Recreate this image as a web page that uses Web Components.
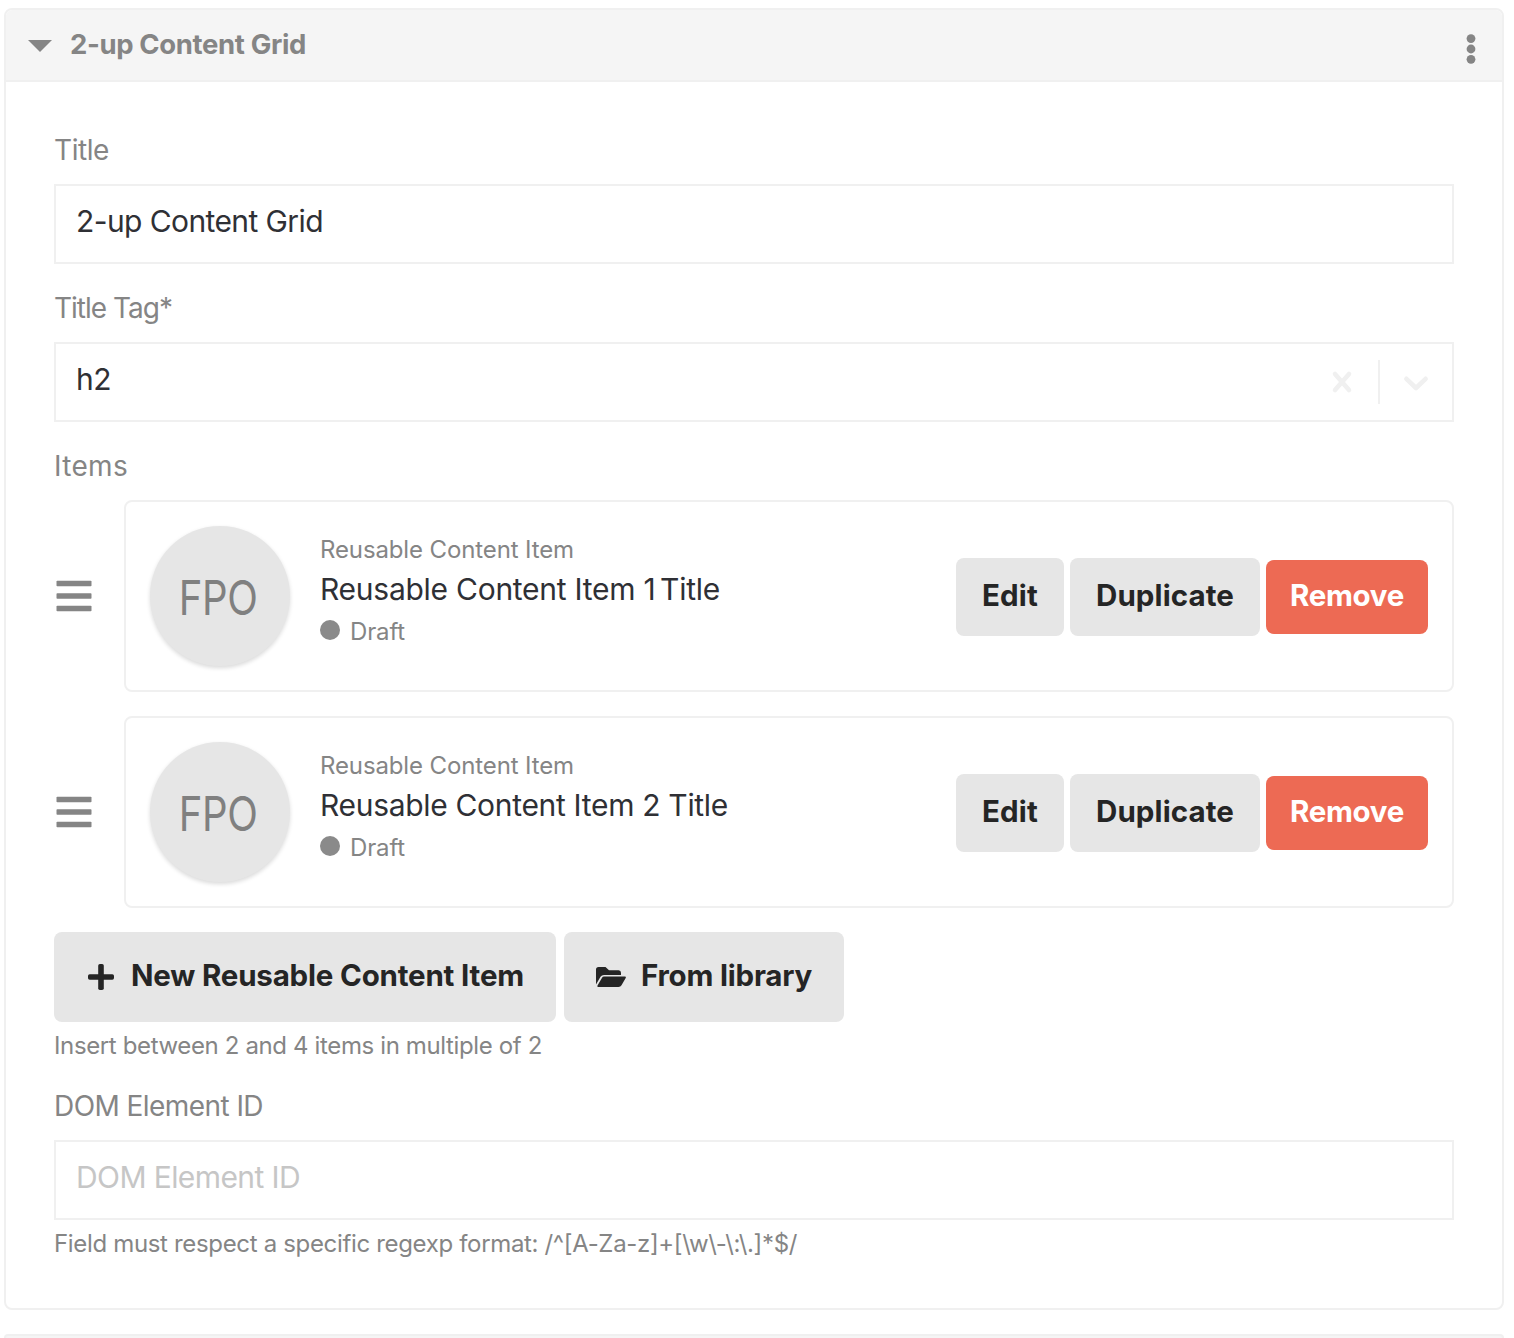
<!DOCTYPE html>
<html lang="en">
<head>
<meta charset="utf-8">
<title>2-up Content Grid</title>
<style>
html,body{margin:0;background:#fff}
body{font-family:Inter,"Liberation Sans",sans-serif;color:#2f3035;--line:#f0f0f0;--muted:#858585;--btn:#e6e6e6;font-size:28px}
main{display:flex;flex-direction:column;gap:24px;padding:8px 10px 0 4px;box-sizing:border-box;height:1338px;overflow:hidden}
.tight{word-spacing:-3.500px}
</style>
</head>
<body>
<main>
  <block-panel>
    <fit-text slot="title" w="236">2-up Content Grid</fit-text>
    <form-field>
      <fit-text slot="label" w="55">Title</fit-text>
      <text-box><fit-text w="247">2-up Content Grid</fit-text></text-box>
    </form-field>
    <form-field>
      <fit-text slot="label" w="118">Title Tag*</fit-text>
      <text-box kind="select"><fit-text w="35">h2</fit-text></text-box>
    </form-field>
    <form-field>
      <fit-text slot="label" w="74">Items</fit-text>
      <content-item><fit-text w="400">Reusable Content Item 1<span class="tight"> Title</span></fit-text></content-item>
      <content-item><fit-text w="408">Reusable Content Item 2 Title</fit-text></content-item>
      <item-actions></item-actions>
      <fit-text slot="hint" w="488">Insert between 2 and 4 items in multiple of 2</fit-text>
    </form-field>
    <form-field>
      <fit-text slot="label" w="209">DOM Element ID</fit-text>
      <text-box kind="empty"><fit-text w="224">DOM Element ID</fit-text></text-box>
      <fit-text slot="hint" w="743">Field must respect a specific regexp format: /^[A-Za-z]+[\w\-\:\.]*$/</fit-text>
    </form-field>
  </block-panel>
  <block-panel bare></block-panel>
</main>
<script>
const define = (name, html, ready) => customElements.define(name, class extends HTMLElement {
  connectedCallback() {
    if (this.shadowRoot) return;
    const t = document.createElement('template');
    t.innerHTML = html;
    this.attachShadow({ mode: 'open' }).append(t.content.cloneNode(true));
    if (ready) ready(this);
  }
});

define('block-panel', `
<style>
:host{display:block;flex:none;border:2px solid var(--line);border-radius:8px;overflow:hidden}
:host([bare]){flex:0 0 2px;border-bottom:0;border-radius:8px 8px 0 0;background:#f5f5f5}
:host([bare]) header,:host([bare]) .body{display:none}
header{display:flex;align-items:center;justify-content:space-between;height:70px;padding:0 26px 0 22px;background:#f5f5f5;border-bottom:2px solid var(--line);color:var(--muted)}
.left{display:flex;align-items:center;gap:18px;font-weight:700;font-size:27.500px;line-height:68px;padding-bottom:2px}
svg{display:block;flex:none}
.caret{margin-top:4px}
.dots{margin-top:8px}
.body{display:flex;flex-direction:column;gap:24px;padding:48px 48px 40px}
</style>
<header><div class="left">
<svg class="caret" width="24" height="12" viewBox="0 0 24 12"><path d="M0 0h24L12 12z" fill="#858585"/></svg>
<slot name="title"></slot></div>
<svg class="dots" width="10" height="32" viewBox="0 0 10 32" fill="#858585"><circle cx="5" cy="5.6" r="4.4"/><circle cx="5" cy="16" r="4.4"/><circle cx="5" cy="26.3" r="4.4"/></svg>
</header>
<div class="body"><slot></slot></div>`);

define('form-field', `
<style>
:host{display:block}
.label{display:block;height:40px;line-height:40px;margin-bottom:14px;color:var(--muted)}
.content{display:flex;flex-direction:column;gap:24px}
.hint{display:block;font-size:24px;line-height:48px;color:var(--muted)}
:host([hinted]:not(:last-child)){margin-bottom:-8px}
</style>
<div class="label"><slot name="label"></slot></div>
<div class="content"><slot></slot></div>
<div class="hint"><slot name="hint"></slot></div>`, el => {
  el.toggleAttribute('hinted', !!el.querySelector('[slot=hint]'));
  if (!el.hasAttribute('hinted')) el.shadowRoot.querySelector('.hint').remove();
});

define('text-box', `
<style>
:host{display:flex;justify-content:space-between;box-sizing:border-box;height:80px;border:2px solid var(--line);background:#fff;padding-left:20px;font-size:30px;line-height:71px}
:host([kind=empty]){color:#c6c6c6}
.tools{display:none;align-items:center;height:76px;padding-right:22px}
:host([kind=select]) .tools{display:flex}
.rule{width:2px;height:44px;background:var(--line);margin:0 22px 0 24px}
svg{display:block;fill:none;stroke:#f0f0f0;stroke-width:4.6;stroke-linecap:round;stroke-linejoin:round}
</style>
<div><slot></slot></div>
<div class="tools">
<svg width="24" height="24" viewBox="0 0 24 24"><path d="M5 4l14 16M19 4L5 20"/></svg>
<span class="rule"></span>
<svg width="28" height="24" viewBox="0 0 28 24"><path d="M4.4 8.8L14 18l9.600-9.200"/></svg>
</div>`);

define('ui-button', `
<style>
:host{display:flex;align-items:center;justify-content:center;box-sizing:border-box;height:78px;padding:0 26px 4px;border-radius:8px;background:var(--btn);color:#252525;font-size:29.500px;font-weight:700;line-height:40px}
:host([kind=danger]){height:74px;padding:0 24px 4px;background:#ed6a54;color:#fff}
:host([kind=large]){height:90px;padding:0 32px 4px}
</style><slot></slot>`);

define('content-item', `
<style>
:host{display:flex;align-items:center;height:192px;gap:32px}
.grip{display:block;flex:none;margin-left:2px}
.card{flex:1;display:flex;align-items:center;box-sizing:border-box;height:192px;padding:0 24px;border:2px solid var(--line);border-radius:8px}
.avatar{width:140px;height:140px;border-radius:50%;background:var(--btn);box-shadow:0 2px 4px rgba(0,0,0,.15);display:flex;align-items:center;justify-content:center;color:#808080;font-size:48px;line-height:60px}
.avatar span{transform:scaleX(.835);margin:4px 4px 0 0;letter-spacing:-.5px}
.info{flex:1;padding:0 0 8px 30px}
.type{font-size:24px;line-height:36px;color:var(--muted)}
.name{font-size:30px;line-height:43px;padding-bottom:1px}
.state{display:flex;align-items:center;gap:10px;font-size:24px;line-height:40px;color:var(--muted)}
.state i{width:20px;height:20px;border-radius:50%;background:#8a8a8a;margin-bottom:4px}
.buttons{display:flex;align-items:center;gap:6px;padding-top:2px}
</style>
<svg class="grip" width="36" height="32" viewBox="0 0 36 32" fill="#858585"><rect x=".5" y=".8" width="35" height="5.400" rx=".8"/><rect x=".5" y="13.300" width="35" height="5.400" rx=".8"/><rect x=".5" y="25.800" width="35" height="5.400" rx=".8"/></svg>
<div class="card">
<div class="avatar"><span>FPO</span></div>
<div class="info">
<div class="type"><fit-text w="254">Reusable Content Item</fit-text></div>
<div class="name"><slot></slot></div>
<div class="state"><i></i><fit-text w="55">Draft</fit-text></div>
</div>
<div class="buttons">
<ui-button><fit-text w="56">Edit</fit-text></ui-button>
<ui-button><fit-text w="138">Duplicate</fit-text></ui-button>
<ui-button kind="danger"><fit-text w="114">Remove</fit-text></ui-button>
</div></div>`);

define('item-actions', `
<style>
:host{display:flex;gap:8px}
svg{display:block;flex:none;fill:#252525;margin-top:4px}
.plus{margin:4px 17px 0 2px}
.folder{margin-right:15px}
</style>
<ui-button kind="large"><svg class="plus" width="26" height="26" viewBox="0 0 26 26"><rect y="10.200" width="26" height="5.600" rx="1.700"/><rect x="10.200" width="5.600" height="26" rx="1.700"/></svg><fit-text w="393">New Reusable Content Item</fit-text></ui-button>
<ui-button kind="large"><svg class="folder" width="30" height="20" viewBox="0 0 30 20"><path d="M0 17.400V2.500Q0 0 2.500 0H9.500L13 3.300H22.600Q25 3.300 25 5.800V7.900H8Q5.700 7.900 4.500 9.800L0 17.400ZM1.500 18.500L6.200 10.500Q6.800 9.600 8 9.600H29Q30.300 9.700 29.700 10.900L25.500 18.200Q24.500 20 22.500 20H2.300Q.8 20 1.500 18.500Z"/></svg><fit-text w="171">From library</fit-text></ui-button>`);

/* Single line of text whose tracking is set so that it fills the width in "w". */
define('fit-text', `<style>:host{display:inline-block;white-space:nowrap}</style><slot></slot>`, el => {
  const goal = +el.getAttribute('w');
  requestAnimationFrame(() => {
    const natural = el.getBoundingClientRect().width;
    el.style.letterSpacing = ((goal - natural) / el.textContent.length).toFixed(3) + 'px';
    el.style.width = goal + 'px';
  });
});
</script>
</body>
</html>
